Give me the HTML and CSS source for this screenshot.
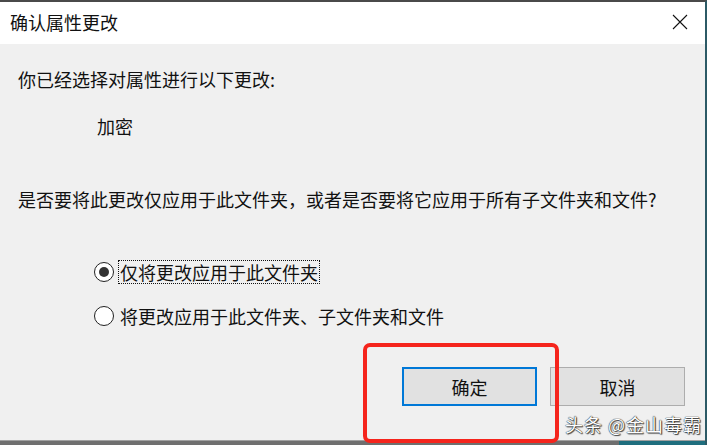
FILE: index.html
```html
<!DOCTYPE html>
<html lang="zh">
<head>
<meta charset="utf-8">
<link rel="stylesheet" href="styles.css">
</head>
<body>
<div class="window">
  <div class="titlebar">
    <span class="title">确认属性更改</span>
    <svg class="close" width="16" height="16" viewBox="0 0 16 16"><path d="M1 1 L15 15 M15 1 L1 15" stroke="#111" stroke-width="1.1" fill="none"/></svg>
  </div>
  <div class="body">
    <p class="line first">你已经选择对属性进行以下更改:</p>
    <p class="line attr">加密</p>
    <p class="line question">是否要将此更改仅应用于此文件夹，或者是否要将它应用于所有子文件夹和文件?</p>
    <div class="options">
      <label class="option"><span class="radio checked"></span><span class="label focus">仅将更改应用于此文件夹</span></label>
      <label class="option"><span class="radio"></span><span class="label">将更改应用于此文件夹、子文件夹和文件</span></label>
    </div>
    <div class="buttons">
      <button class="btn primary">确定</button>
      <button class="btn">取消</button>
    </div>
  </div>
  <div class="bottom"><div class="bottom-gray"></div><div class="bottom-teal"></div></div>
  <div class="highlight"></div>
  <div class="watermark">头条 @金山毒霸</div>
</div>
</body>
</html>
```
FILE: styles.css
```css
* { box-sizing: border-box; }
html, body { margin: 0; padding: 0; }
body {
  width: 707px;
  height: 445px;
  overflow: hidden;
  font-family: "Noto Sans CJK SC", "Microsoft YaHei", sans-serif;
  color: #111;
}
.window {
  position: relative;
  width: 707px;
  height: 445px;
  display: flex;
  flex-direction: column;
  background: #f0f0f0;
  border-top: 2px solid #4a4a4a;
  border-right: 2px solid #2c5a66;
}
.titlebar {
  height: 42px;
  background: #fff;
  display: flex;
  align-items: center;
  justify-content: space-between;
  padding: 0 17px 0 10px;
  flex: none;
}
.title { font-size: 18px; line-height: 24px; margin-top: -2px; }
.close { margin-top: -2px; }
.body {
  flex: 1;
  display: flex;
  flex-direction: column;
  padding: 0 0 0 18px;
}
.line { margin: 0; font-size: 18px; line-height: 24px; }
.first { margin-top: 23px; }
.attr { margin-top: 23px; padding-left: 79px; }
.question { margin-top: 49px; }
.options {
  display: flex;
  flex-direction: column;
  gap: 20px;
  margin-top: 49px;
  padding-left: 76px;
}
.option { display: flex; align-items: center; gap: 4px; font-size: 18px; line-height: 22px; }
.radio {
  width: 20px; height: 20px;
  border: 1px solid #222;
  border-radius: 50%;
  background: #fff;
  display: flex; align-items: center; justify-content: center;
  flex: none;
}
.radio.checked::after {
  content: "";
  width: 10px; height: 10px;
  border-radius: 50%;
  background: #333;
}
.label { padding: 0 1px; border: 1px solid transparent; }
.label.focus { border: 1px dotted #111; }
.buttons {
  display: flex;
  gap: 13px;
  justify-content: flex-end;
  margin-top: 39px;
  padding-right: 20px;
}
.btn {
  width: 135px;
  height: 39px;
  background: #e1e1e1;
  border: 1px solid #adadad;
  font-family: inherit;
  font-size: 18px;
  color: #111;
  padding: 0;
}
.btn.primary { border: 2px solid #0078d7; }
.bottom {
  margin-top: auto;
  height: 5px;
  display: flex;
  border-top: 1px solid #a0a0a0;
  flex: none;
}
.bottom-gray { flex: 1; background: #6f6f6f; }
.bottom-teal { width: 86px; background: #1f6e7e; }
.highlight {
  position: absolute;
  left: 363px;
  top: 341px;
  width: 196px;
  height: 100px;
  border: 4px solid #f5241c;
  border-radius: 7px;
}
.watermark {
  position: absolute;
  left: 565px;
  top: 410px;
  font-size: 18px;
  line-height: 24px;
  letter-spacing: 1px;
  color: #fff;
  text-shadow: 0 0 1px #222, 0 0 1px #222, 1px 1px 1px #444;
  white-space: nowrap;
}
```
